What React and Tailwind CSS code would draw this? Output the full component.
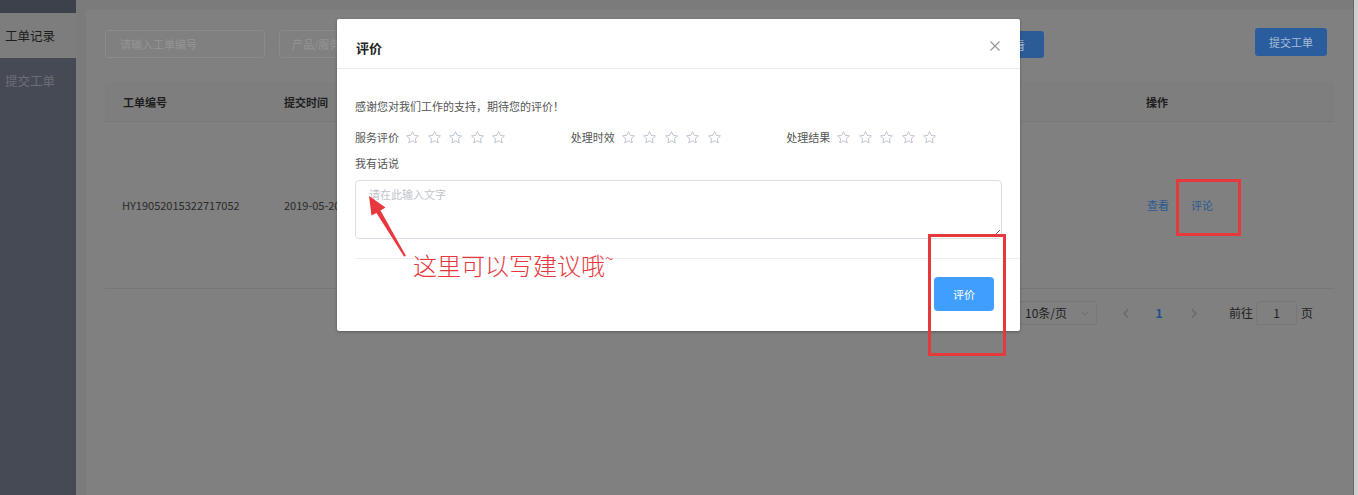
import React from "react";

const Star = () => (
  <svg width="15" height="15" viewBox="0 0 24 24" fill="none" stroke="#bcc6d3" strokeWidth="1.6" strokeLinejoin="round">
    <path d="M12 2.5l2.9 6.1 6.6.8-4.9 4.6 1.3 6.6L12 17.3l-5.9 3.3 1.3-6.6-4.9-4.6 6.6-.8z" />
  </svg>
);

function RateGroup({ label }) {
  return (
    <div className="w-[216px] flex items-center gap-[6px]">
      <span className="text-[11px] leading-4 text-[#555]">{label}</span>
      <div className="flex items-center gap-[6.5px]">
        {[0, 1, 2, 3, 4].map((i) => (
          <Star key={i} />
        ))}
      </div>
    </div>
  );
}

export default function App() {
  return (
    <div className="relative w-[1358px] h-[495px] overflow-hidden flex font-['Noto_Sans_CJK_SC',sans-serif]">
      {/* Sidebar */}
      <div className="w-[76px] shrink-0 bg-[#464a54] flex flex-col">
        <div className="h-[13px] bg-[#3d414c]" />
        <div className="h-[45px] bg-[#7d7d7d] flex items-center pl-[5px] text-[12.5px] leading-4 text-[#1c1c1c]">
          工单记录
        </div>
        <div className="h-[45px] flex items-center pl-[5px] text-[12.5px] leading-4 text-[#6b6e76]">
          提交工单
        </div>
      </div>

      {/* Main */}
      <div className="flex-1 bg-[#7b7b7b] pt-[10px] pl-[10px] flex">
        <div className="flex-1 bg-[#808080] px-[19px] flex flex-col">
          {/* search row */}
          <div className="mt-[18px] h-[30px] flex items-start">
            <div className="w-[939px] flex items-start justify-between">
              <div className="flex items-start gap-[14px]">
                <div className="mt-[2px] w-[160px] h-[28px] border border-[#8b8b8b] rounded-[3px] flex items-center pl-[14px] text-[11px] leading-4 text-[#959595]">
                  请输入工单编号
                </div>
                <div className="mt-[2px] w-[160px] h-[28px] border border-[#8b8b8b] rounded-[3px] flex items-center pl-[12px] text-[11px] leading-4 text-[#959595]">
                  产品/服务
                </div>
              </div>
              <div className="mt-[3px] w-[60px] h-[27px] bg-[#2b5c98] rounded-[3px] flex items-center justify-center text-[11px] leading-4 text-[#a9bdd6]">
                查看
              </div>
            </div>
            <div className="ml-auto mr-[7px] w-[72px] h-[28px] bg-[#295d9e] rounded-[3px] flex items-center justify-center text-[11px] leading-4 text-[#a9bdd6]">
              提交工单
            </div>
          </div>

          {/* table */}
          <div className="mt-[24px] flex flex-col">
            <div className="h-[40px] bg-[#7e7e7e] border-b border-[#787878] flex items-center text-[11px] leading-4 font-bold text-[#1e1e1e]">
              <div className="w-[161px] pl-[18px]">工单编号</div>
              <div className="flex-1 pl-[18px]">提交时间</div>
              <div className="w-[206px] pl-[18px]">操作</div>
            </div>
            <div className="h-[167px] border-b border-[#777] flex items-center text-[11px] leading-4 text-[#2a2a2a]">
              <div className="w-[161px] pl-[17px]">HY19052015322717052</div>
              <div className="flex-1 pl-[18px]">2019-05-20 15:32:27</div>
              <div className="w-[206px] pl-[19px] flex gap-[22px] text-[#2b5a94]">
                <span>查看</span>
                <span>评论</span>
              </div>
            </div>
          </div>

          {/* pagination */}
          <div className="mt-[12px] h-[24px] flex items-center justify-end pr-[21px] text-[11px] leading-4 text-[#1f1f1f]">
            <div className="w-[78px] h-[24px] border border-[#777] rounded-[3px] flex items-center justify-between pl-[5px] pr-[7px]">
              <span className="text-[12px]">10条/页</span>
              <svg width="8" height="5" viewBox="0 0 8 5" fill="none" stroke="#6a6a6a" strokeWidth="1">
                <path d="M0.5 0.5L4 4L7.5 0.5" />
              </svg>
            </div>
            <div className="ml-[14px] w-[30px] flex justify-center">
              <svg width="6" height="9" viewBox="0 0 6 9" fill="none" stroke="#666" strokeWidth="1.1">
                <path d="M5 0.5L1 4.5L5 8.5" />
              </svg>
            </div>
            <div className="ml-[3px] w-[30px] text-center font-bold text-[12px] text-[#23528a]">1</div>
            <div className="ml-[5px] w-[30px] flex justify-center">
              <svg width="6" height="9" viewBox="0 0 6 9" fill="none" stroke="#666" strokeWidth="1.1">
                <path d="M1 0.5L5 4.5L1 8.5" />
              </svg>
            </div>
            <span className="ml-[20px] text-[12px]">前往</span>
            <div className="ml-[3px] w-[41px] h-[24px] border border-[#777] rounded-[3px] flex items-center justify-center text-[12px]">
              1
            </div>
            <span className="ml-[4px] text-[12px]">页</span>
          </div>
        </div>
      </div>

      {/* scrollbar */}
      <div className="w-[5px] shrink-0 bg-[#cfcfcf] border-l border-[#666]" />

      {/* Modal */}
      <div className="absolute left-[337px] top-[19px] w-[683px] h-[312px] bg-white rounded-[2px] shadow-[0_1px_3px_rgba(0,0,0,0.3)] flex flex-col">
        <div className="h-[50px] shrink-0 border-b border-[#ebebeb] flex items-start justify-between pt-[21px] pl-[19px] pr-[20px]">
          <span className="text-[13px] leading-4 font-bold text-[#222]">评价</span>
          <svg className="mt-[1px]" width="10" height="10" viewBox="0 0 10 10" fill="none" stroke="#909399" strokeWidth="1.1">
            <path d="M0.5 0.5L9.5 9.5M9.5 0.5L0.5 9.5" />
          </svg>
        </div>
        <div className="px-[18px] pt-[29px]">
          <p className="text-[11px] leading-4 text-[#555]">感谢您对我们工作的支持，期待您的评价！</p>
          <div className="mt-[13px] h-5 flex items-center">
            <RateGroup label="服务评价" />
            <RateGroup label="处理时效" />
            <RateGroup label="处理结果" />
          </div>
          <p className="mt-[8px] text-[11px] leading-4 text-[#555]">我有话说</p>
          <textarea
            className="mt-[9px] block w-full h-[59px] border border-[#dcdfe6] rounded-[4px] px-[13px] py-[5px] text-[11px] leading-4 text-[#555] placeholder:text-[#c0c4cc] outline-none"
            placeholder="请在此输入文字"
          />
        </div>
        <div className="ml-[18px] mt-[19px] border-t border-[#eeeeee] flex justify-end pr-[26px] pt-[18px]">
          <button className="w-[60px] h-[34px] bg-[#409eff] rounded-[4px] text-white text-[11px] leading-4">
            评价
          </button>
        </div>
      </div>

      {/* Annotations */}
      <div className="absolute left-[1176px] top-[179px] w-[65px] h-[57px] border-[3px] border-[#e5393d]" />
      <div className="absolute left-[928px] top-[234px] w-[78px] h-[122px] border-[3px] border-[#e5393d]" />
      <svg className="absolute left-0 top-0" width="1358" height="495" viewBox="0 0 1358 495" style={{ pointerEvents: "none" }}>
        <polygon
          points="369,196 385.5,207.5 380.5,210.5 406,256 404,256.5 376.5,213 371.5,215.5"
          fill="#e8383d"
        />
      </svg>
      <div className="absolute left-[413px] top-[251px] text-[24px] leading-[28px] font-light text-[#e8383d] whitespace-nowrap">
        这里可以写建议哦<span className="align-top text-[16px] leading-[14px]">~</span>
      </div>
    </div>
  );
}
